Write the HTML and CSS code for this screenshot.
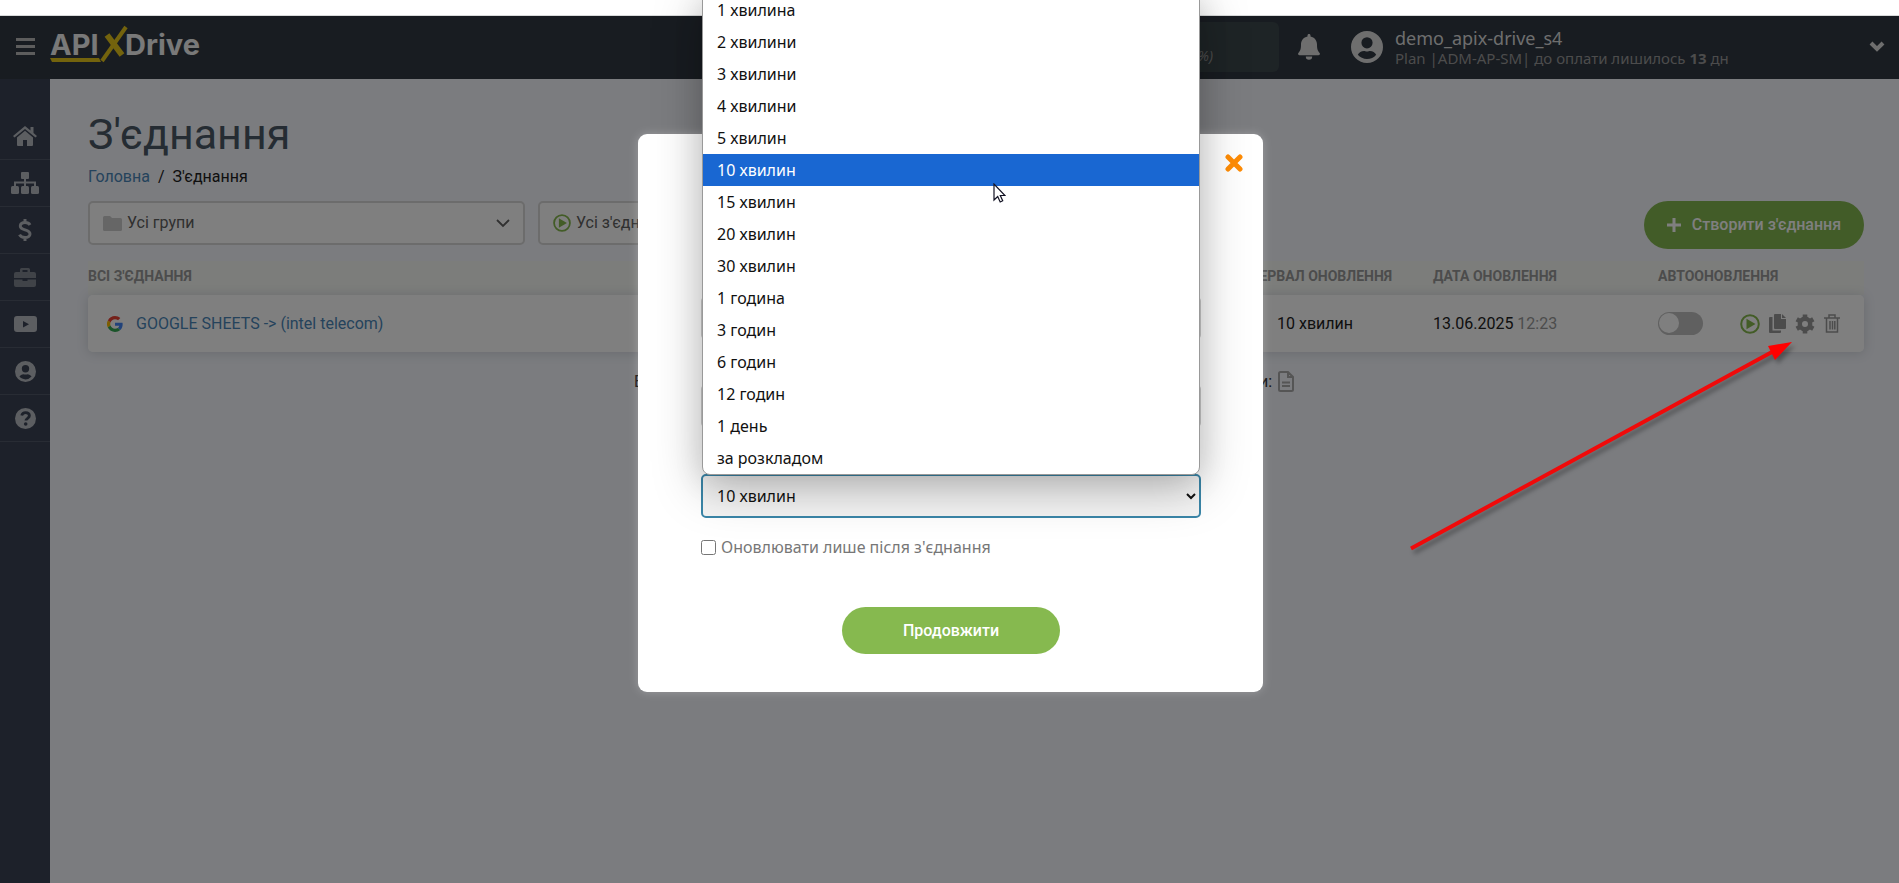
FILE: index.html
```html
<!DOCTYPE html>
<html lang="uk">
<head>
<meta charset="utf-8">
<title>З'єднання</title>
<link rel="stylesheet" href="styles.css">
</head>
<body>
<svg class="defs" aria-hidden="true">
  <symbol id="i-user" viewBox="0 0 32 32"><path fill-rule="evenodd" d="M16 0a16 16 0 1 0 0 32 16 16 0 0 0 0-32zm0 6.200a5.600 5.600 0 1 1 0 11.200 5.600 5.600 0 0 1 0-11.200zM16 28c-3.700 0-7-1.700-9.200-4.300 1.200-2.200 3.500-3.700 6.200-3.700.9 0 1.700.5 3 .5s2.100-.5 3-.5c2.700 0 5 1.500 6.200 3.700A12 12 0 0 1 16 28z"/></symbol>
  <symbol id="i-play" viewBox="0 0 20 20"><circle cx="10" cy="10" r="8.800" fill="none" stroke="currentColor" stroke-width="2"/><path d="M6.500 4.800v10.400l9-5.200z"/></symbol>
</svg>
<div class="window">
  <header class="topbar">
    <button class="icon-btn burger" aria-label="Меню"><svg width="19" height="17" viewBox="0 0 19 17"><path d="M0 0h19v3H0zM0 7h19v3H0zM0 14h19v3H0z"/></svg></button>
    <a class="logo" href="#" aria-label="APIXDrive">
      <svg width="156" height="40" viewBox="0 0 156 40">
        <text class="logo-text" x="0" y="28">API</text>
        <text class="logo-text" x="75" y="28">Drive</text>
        <g class="logo-mark" fill="none"><path d="M57 8l15 20" stroke-width="6"/><path d="M76 0L52 34" stroke-width="4"/></g>
        <path class="logo-line" d="M0 31h49l2 4H2z"/>
      </svg>
    </a>
    <div class="usage">%)</div>
    <button class="icon-btn bell" aria-label="Сповіщення"><svg width="22" height="26" viewBox="0 0 22 26"><path d="M11 0c-1 0-1.500.7-1.500 1.500v1C5.500 3.300 3 6.500 3 10.500c0 5.500-1 6.500-2.600 8.400-.8 1-.2 2.300 1.100 2.300h19c1.300 0 1.900-1.300 1.100-2.300C20 17 19 16 19 10.500c0-4-2.500-7.200-6.500-8v-1C12.500.7 12 0 11 0zM7.800 22.500a3.200 3.200 0 0 0 6.400 0z"/></svg></button>
    <div class="account">
      <svg width="32" height="32"><use href="#i-user"/></svg>
      <div class="account-text"><div class="account-name">demo_apix-drive_s4</div><div class="account-plan">Plan |ADM-AP-SM| до оплати лишилось <b>13</b> дн</div></div>
    </div>
    <button class="icon-btn more" aria-label="Розгорнути"><svg width="16" height="11" viewBox="0 0 16 11"><path d="M2 2l6 6 6-6" fill="none" stroke="currentColor" stroke-width="4"/></svg></button>
  </header>
  <div class="body">
    <nav class="sidebar">
      <a href="#" aria-label="Головна"><svg width="24" height="20" viewBox="0 0 24 20"><path d="M12 0L0 10l1.500 1.600L12 3l10.500 8.600L24 10l-3.500-3V1h-3v3.500zM12 4.800L4 11.400V19q0 1 1 1h5v-6h4v6h5q1 0 1-1v-7.600z"/></svg></a>
      <a href="#" aria-label="З'єднання"><svg width="28" height="22" viewBox="0 0 28 22"><rect x="10" y="0" width="8" height="7" rx="1"/><rect x="0" y="14" width="8" height="8" rx="1.500"/><rect x="10" y="14" width="8" height="8" rx="1.500"/><rect x="20" y="14" width="8" height="8" rx="1.500"/><path d="M14 6v8M4 14v-3.500h20V14" fill="none" stroke="currentColor" stroke-width="2"/></svg></a>
      <a href="#" aria-label="Оплата"><svg width="14" height="22" viewBox="0 0 14 22"><path d="M12 6C11 4 9 3.500 7 3.500 4 3.500 2.300 5 2.300 7c0 5 9.700 2.800 9.700 8 0 2-2 3.500-5 3.500-2.500 0-4.500-.8-5.500-2.800M7 0v4M7 18v4" fill="none" stroke="currentColor" stroke-width="3"/></svg></a>
      <a href="#" class="dim" aria-label="Проєкти"><svg width="22" height="19" viewBox="0 0 22 19"><path fill-rule="evenodd" d="M2 4h4V1.500Q6 0 7.500 0h7Q16 0 16 1.500V4h4q2 0 2 2v4H0V6q0-2 2-2zm6.500 0h5V2h-5zM0 11.500h8.500V13h5v-1.500H22V17q0 2-2 2H2q-2 0-2-2z"/></svg></a>
      <a href="#" aria-label="Відео"><svg width="23" height="16" viewBox="0 0 23 16"><path fill-rule="evenodd" d="M3 0h17q3 0 3 3v10q0 3-3 3H3q-3 0-3-3V3q0-3 3-3zm6 5v6.500l6-3.200z"/></svg></a>
      <a href="#" aria-label="Профіль"><svg width="21" height="21"><use href="#i-user"/></svg></a>
      <a href="#" aria-label="Довідка"><svg width="21" height="21" viewBox="0 0 21 21"><circle cx="10.500" cy="10.500" r="10.500"/><path class="cut" d="M6.700 7.500c.5-1.800 1.900-2.800 3.800-2.800 2.200 0 3.900 1.200 3.900 3.100 0 2.500-3.500 2.500-3.500 4.800" stroke-width="2.800"/><circle class="cut-fill" cx="10.700" cy="16" r="1.800"/></svg></a>
    </nav>
    <main>
      <h1>З'єднання</h1>
      <div class="crumbs"><a href="#">Головна</a><span>/</span><span>З'єднання</span></div>
      <div class="filters">
        <button class="filter"><svg class="grey" width="19" height="15" viewBox="0 0 19 15"><path d="M1.500 0H7l2 2h8.500Q19 2 19 3.500v10q0 1.500-1.500 1.500h-16Q0 15 0 13.500v-12Q0 0 1.500 0z"/></svg><span>Усі групи</span><svg class="chev" width="14" height="10" viewBox="0 0 14 10"><path d="M1 2l6 6 6-6" fill="none" stroke="currentColor" stroke-width="1.800"/></svg></button>
        <button class="filter"><svg class="green" width="18" height="18"><use href="#i-play"/></svg><span>Усі з'єднання</span></button>
        <button class="create"><svg width="14" height="14" viewBox="0 0 14 14"><path d="M7 0v14M0 7h14" stroke="currentColor" stroke-width="3"/></svg>Створити з'єднання</button>
      </div>
      <table>
        <thead><tr><th class="c-name">Всі з'єднання</th><th class="c-int">Інтервал оновлення</th><th class="c-date">Дата оновлення</th><th class="c-auto">Автооновлення</th><th class="c-act"></th></tr></thead>
        <tbody><tr>
          <td><div class="name"><svg width="16" height="16" viewBox="0 0 48 48"><path fill="#ea4335" d="M24 9.500c3.500 0 6.700 1.200 9.200 3.600l6.900-6.900C35.900 2.400 30.500 0 24 0 14.600 0 6.500 5.400 2.600 13.200l8 6.200C12.400 13.700 17.700 9.500 24 9.500z"/><path fill="#4285f4" d="M47 24.600c0-1.600-.2-3.100-.4-4.600H24v9h12.900c-.6 3-2.200 5.500-4.700 7.200l7.700 6C44.400 38 47 31.800 47 24.600z"/><path fill="#fbbc05" d="M10.500 28.600a14.500 14.500 0 0 1 0-9.200l-8-6.200a24 24 0 0 0 0 21.600z"/><path fill="#34a853" d="M24 48c6.500 0 11.900-2.100 15.900-5.800l-7.700-6c-2.200 1.500-4.900 2.300-8.200 2.300-6.300 0-11.600-4.200-13.500-9.900l-8 6.200C6.500 42.600 14.600 48 24 48z"/></svg><a href="#">GOOGLE SHEETS -&gt; (intel telecom)</a></div></td>
          <td class="interval">10 хвилин</td>
          <td>13.06.2025 <span class="time">12:23</span></td>
          <td><input class="switch" type="checkbox" aria-label="Автооновлення"></td>
          <td><div class="actions">
            <button class="icon-btn green" aria-label="Запустити"><svg width="20" height="20"><use href="#i-play"/></svg></button>
            <button class="icon-btn" aria-label="Копіювати"><svg width="17" height="19" viewBox="0 0 17 19"><path d="M6 0h6v5h5v9q0 1-1 1H6q-1 0-1-1V1q0-1 1-1zM13 0l4 4h-4zM1 3h2.500v13.500H12V18q0 1-1 1H1q-1 0-1-1V4q0-1 1-1z"/></svg></button>
            <button class="icon-btn" aria-label="Налаштування"><svg width="20" height="20" viewBox="0 0 20 20"><g fill="none" stroke="currentColor"><circle cx="10" cy="10" r="5.200" stroke-width="4.400"/><path d="M10 4.500V.5M10 15.500v4M5.200 7.200L1.700 5.200M14.800 12.800l3.500 2M14.800 7.200l3.500-2M5.200 12.800l-3.500 2" stroke-width="4.600"/></g></svg></button>
            <button class="icon-btn" aria-label="Видалити"><svg width="16" height="19" viewBox="0 0 16 19"><path d="M0 4h16M5 4V1h6v3M2.500 4v14h11V4M6 7v8.500M8.500 7v8.500M10.800 7v8.500" fill="none" stroke="currentColor" stroke-width="1.500"/></svg></button>
          </div></td>
        </tr></tbody>
      </table>
      <div class="summary"><span>Всього:</span><span class="export">даними: <svg width="16" height="21" viewBox="0 0 16 21"><path d="M2.500 1H10l5 5v12.500q0 1.500-1.500 1.500h-11Q1 20 1 18.500v-16Q1 1 2.500 1zM10 1v5h5M4 11.500h8M4 15h8" fill="none" stroke="currentColor" stroke-width="2"/></svg></span></div>
    </main>
  </div>
  <div class="backdrop">
    <section class="modal" role="dialog" aria-modal="true" aria-label="Налаштування оновлення">
      <button class="icon-btn close" aria-label="Закрити"><svg width="18" height="18" viewBox="0 0 18 18"><path d="M3 3l12 12M15 3L3 15" stroke="currentColor" stroke-width="5" stroke-linecap="round"/></svg></button>
      <form>
        <input class="field" type="text" aria-label="Назва">
        <input class="field" type="text" aria-label="Група">
        <div class="picker">
          <select aria-label="Інтервал оновлення"><option>10 хвилин</option></select>
          <ul class="options">
            <li>1 хвилина</li><li>2 хвилини</li><li>3 хвилини</li><li>4 хвилини</li><li>5 хвилин</li><li class="active">10 хвилин</li><li>15 хвилин</li><li>20 хвилин</li><li>30 хвилин</li><li>1 година</li><li>3 годин</li><li>6 годин</li><li>12 годин</li><li>1 день</li><li>за розкладом</li>
          </ul>
          <svg class="cursor" width="13" height="20" viewBox="0 0 13 20"><path d="M1 1v16l3.700-3.500 2.500 5.500 2.500-1.200-2.400-5.300H12z" fill="#fff" stroke="#112" stroke-width="1.200"/></svg>
        </div>
        <label class="check"><input type="checkbox">Оновлювати лише після з'єднання</label>
        <button class="submit" type="button">Продовжити</button>
      </form>
    </section>
  </div>
  <svg class="pointer" width="390" height="220" viewBox="0 0 390 220"><path d="M3 210.500L364 14" stroke="#f00a0a" stroke-width="4"/><path d="M384 4l-24 4 7 14z"/></svg>
</div>
</body>
</html>
```
FILE: styles.css
```css
* { box-sizing: border-box; }
body { margin: 0; padding-top: 15px; background: #fff; font: 16px/20px Roboto, sans-serif; color: #212121; overflow: hidden; }
svg { fill: currentColor; flex: none; }
button, input, select { font: inherit; color: inherit; }
.defs { position: absolute; width: 0; height: 0; }
.window { position: relative; border-top: 1px solid #d8dada; height: calc(100vh - 15px); display: flex; flex-direction: column; }
.icon-btn { display: flex; padding: 0; border: 0; background: none; color: inherit; }

.topbar { display: flex; align-items: center; height: 63px; padding: 0 14px 2px 16px; background: #303842; color: #ddd; font-family: "Noto Sans", sans-serif; }
.burger { color: #bbb; }
.logo { margin: 0 auto 0 15px; color: #fff; display: flex; }
.logo svg { overflow: visible; }
.logo-text { font: 700 29px Inter, sans-serif; fill: #f2f2f2; }
.logo-mark { stroke: #e6c61a; }
.logo-line { fill: #e6c61a; }
.usage { width: 420px; height: 50px; padding: 24px 66px 0 0; text-align: right; border-radius: 6px; background: #3c484c; color: #999; font-style: italic; font-size: 14px; }
.bell { margin-left: 19px; }
.account { display: flex; align-items: center; gap: 12px; margin-left: 31px; width: 518px; }
.account-name { font-size: 18px; line-height: 22px; }
.account-plan { font-size: 15px; line-height: 18px; color: #999; }

.body { display: flex; flex: 1; }
.sidebar { width: 50px; padding-top: 34px; background: #3a4254; color: #b8bcc2; }
.sidebar a { display: flex; align-items: center; justify-content: center; height: 47px; border-bottom: 1px solid #515969; color: inherit; }
.sidebar .dim { color: #808690; }
.cut { fill: none; stroke: #3a4254; }
.cut-fill { fill: #3a4254; }
main { flex: 1; padding: 29px 35px 0 38px; background: #f6f8fe; }
h1 { margin: 0; font-size: 43px; line-height: 52px; font-weight: 400; color: #4a5866; }
.crumbs { display: flex; gap: 8px; margin-top: 7px; }
.crumbs a, .name a { color: #4a86b8; text-decoration: none; }
.filters { display: flex; gap: 13px; margin-top: 14px; }
.filter { display: flex; align-items: center; gap: 5px; width: 437px; height: 44px; padding: 0 13px; border: 2px solid #d8d8d8; border-radius: 5px; background: #fff; color: #606060; text-align: left; }
.filter .grey { color: #ccc; }
.filter .chev { margin-left: auto; }
.green { color: #86b94e; }
.create { display: flex; align-items: center; justify-content: center; gap: 11px; width: 220px; height: 48px; margin-left: auto; border: 0; border-radius: 24px; background: #84b850; color: #fff; font-weight: 500; }
table { width: 100%; margin-top: 12px; border-collapse: separate; border-spacing: 0; table-layout: fixed; }
th { height: 34px; padding: 0 0 4px; text-align: left; text-transform: uppercase; font-size: 14px; color: #999; background: #f8faf6; white-space: nowrap; }
.c-int { width: 196px; }
.c-date { width: 225px; }
.c-auto { width: 82px; }
.c-act { width: 124px; }
tbody tr { height: 57px; box-shadow: 0 1px 12px #d0d4dc; border-radius: 5px; }
td { padding: 0; background: #fff; }
td:first-child { border-radius: 5px 0 0 5px; }
td:last-child { border-radius: 0 5px 5px 0; }
.interval { padding-left: 40px; }
.name { display: flex; align-items: center; gap: 13px; padding-left: 19px; }
.time { color: #999; }
.switch { appearance: none; display: block; width: 45px; height: 23px; margin: 0; padding: 1px; border-radius: 12px; background: #c0c0c0; }
.switch::before { content: ""; display: block; width: 20px; height: 20px; border-radius: 50%; background: #fff; }
.actions { display: flex; align-items: center; gap: 9px; color: #999; }
.actions .green { color: #86b94e; }
.summary { display: flex; align-items: center; justify-content: space-between; width: 660px; margin: 19px 0 0 calc(50% - 342px); }
.export { display: flex; align-items: center; gap: 6px; }
.summary svg { color: #aaa; }

.backdrop { position: absolute; inset: 0; display: flex; justify-content: center; align-items: flex-start; padding: 118px 0 0 2px; background: rgba(0, 0, 0, .5); }
.modal { position: relative; width: 625px; padding: 162px 62px 38px 63px; border-radius: 9px; background: #fff; box-shadow: 0 0 10px rgba(255, 255, 255, .25); font-family: "Noto Sans", sans-serif; color: #777; }
.close { position: absolute; top: 20px; right: 20px; color: #ff8c05; }
form { display: flex; flex-direction: column; }
.field { height: 44px; margin-bottom: 44px; border: 1px solid #ccc; border-radius: 5px; }
.picker { position: relative; margin-top: 2px; color: #111; }
select { display: block; width: 100%; height: 44px; padding: 0 10px; border: 2px solid #3a86a8; border-radius: 5px; background: #f4f4f4; }
.options { position: absolute; left: 1px; right: 1px; bottom: 43px; margin: 0; padding: 0; list-style: none; background: #fff; border: 1px solid #999; border-radius: 0 0 8px 8px; box-shadow: 0 12px 50px rgba(0, 0, 0, .25), 0 6px 30px rgba(0, 0, 0, .1); }
.options li { height: 32px; padding: 0 14px; line-height: 32px; }
.options .active { background: #1967d2; color: #fff; }
.cursor { position: absolute; left: 292px; bottom: 315px; }
.check { display: flex; align-items: center; gap: 5px; margin-top: 18px; line-height: 22px; }
.check input { width: 15px; height: 15px; margin: 0; }
.submit { align-self: center; width: 218px; height: 47px; margin-top: 49px; border: 0; border-radius: 24px; background: #86b94f; color: #fff; font: 500 16px Roboto, sans-serif; }
.pointer { position: absolute; right: 101px; top: 322px; fill: #f00; filter: drop-shadow(3px 4px 2px rgba(0, 0, 0, .3)); }
```
